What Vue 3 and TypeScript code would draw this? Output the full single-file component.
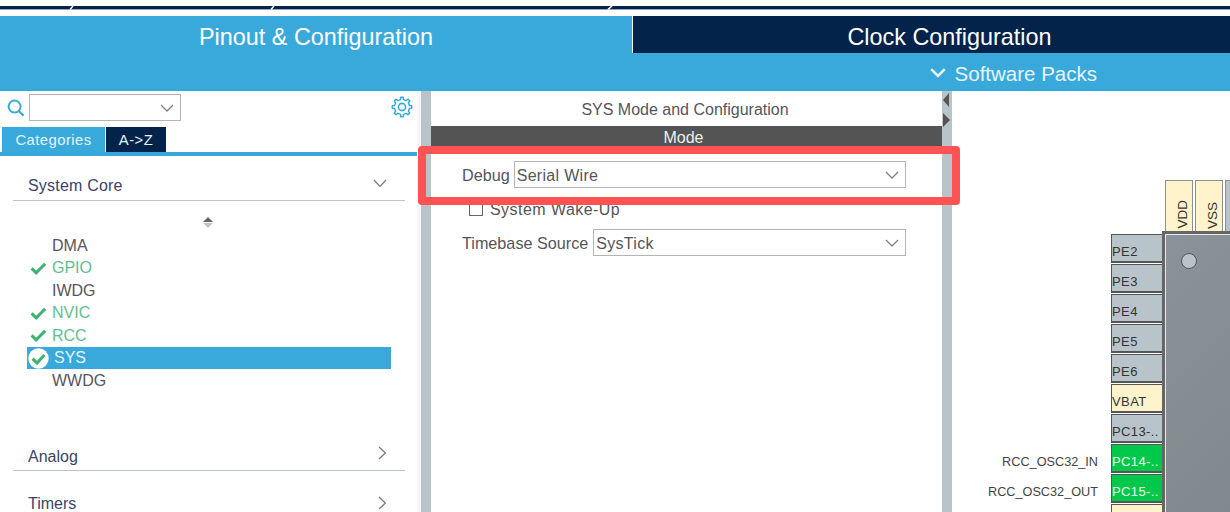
<script setup lang="ts">
interface Item { name: string; state: 'none' | 'ok' | 'active' }
const items: Item[] = [
  { name: 'DMA', state: 'none' },
  { name: 'GPIO', state: 'ok' },
  { name: 'IWDG', state: 'none' },
  { name: 'NVIC', state: 'ok' },
  { name: 'RCC', state: 'ok' },
  { name: 'SYS', state: 'active' },
  { name: 'WWDG', state: 'none' },
]
const leftPins = [
  { name: 'PE2', kind: 'gray', label: '' },
  { name: 'PE3', kind: 'gray', label: '' },
  { name: 'PE4', kind: 'gray', label: '' },
  { name: 'PE5', kind: 'gray', label: '' },
  { name: 'PE6', kind: 'gray', label: '' },
  { name: 'VBAT', kind: 'power', label: '' },
  { name: 'PC13-..', kind: 'gray', label: '' },
  { name: 'PC14-..', kind: 'green', label: 'RCC_OSC32_IN' },
  { name: 'PC15-..', kind: 'green', label: 'RCC_OSC32_OUT' },
  { name: '', kind: 'power', label: '' },
]
const topPins = [
  { name: 'VDD', kind: 'power' },
  { name: 'VSS', kind: 'power' },
  { name: '', kind: 'gray' },
]
function gearPath(): string {
  const teeth = 8
  const cx = 11
  const cy = 11
  const pts: string[] = []
  for (let i = 0; i < teeth; i++) {
    const a = (i / teeth) * Math.PI * 2
    const step = (Math.PI * 2) / teeth
    const seq: [number, number][] = [
      [7.4, a - step * 0.5],
      [7.6, a - step * 0.26],
      [9.8, a - step * 0.16],
      [9.8, a + step * 0.16],
      [7.6, a + step * 0.26],
    ]
    for (const [r, t] of seq) {
      pts.push(`${(cx + r * Math.cos(t)).toFixed(2)} ${(cy + r * Math.sin(t)).toFixed(2)}`)
    }
  }
  return 'M' + pts.join('L') + 'Z'
}
const gear = gearPath()
</script>

<template>
  <div class="app">
    <svg class="strip" width="1230" height="4" viewBox="0 0 1230 4">
      <rect width="1230" height="3.4" fill="#03234b" />
      <path d="M70 3.4 L73 0M271 3.4 L274 0M608 3.4 L612 0" stroke="#fff" stroke-width="1.5" fill="none" />
    </svg>

    <div class="tabs">
      <div class="tab tab-active">Pinout &amp; Configuration</div>
      <div class="tab tab-dark">Clock Configuration</div>
    </div>
    <div class="subbar">
      <svg class="sub-chevron" width="16" height="10" viewBox="0 0 16 10">
        <path d="M1.2 1.2 L8 8 L14.8 1.2" fill="none" stroke="#e6f5fc" stroke-width="2.6" />
      </svg>
      <span>Software Packs</span>
    </div>

    <div class="main">
      <aside class="left">
        <div class="search-row">
          <svg class="search" width="18" height="20" viewBox="0 0 18 20">
            <circle cx="7.6" cy="8.6" r="6" fill="none" stroke="#39a9dc" stroke-width="2" />
            <path d="M11.8 13 L16.6 17.8" stroke="#39a9dc" stroke-width="2.2" />
          </svg>
          <div class="select search-select">
            <span class="select-value"></span>
            <svg class="chev" width="14" height="8" viewBox="0 0 14 8"><path d="M1 1 L7 7 L13 1" /></svg>
          </div>
          <svg class="gear" width="22" height="22" viewBox="0 0 22 22">
            <path :d="gear" fill="none" stroke="#39a9dc" stroke-width="1.5" stroke-linejoin="round" />
            <circle cx="11" cy="11" r="3.6" fill="none" stroke="#39a9dc" stroke-width="1.6" />
          </svg>
        </div>
        <div class="cat-tabs">
          <div class="cat cat-on">Categories</div>
          <div class="cat cat-off">A-&gt;Z</div>
        </div>

        <div class="accordion">
          <div class="acc-head acc-open">
            <span>System Core</span>
            <svg width="14" height="9" viewBox="0 0 14 9"><path d="M1 1 L7 7.4 L13 1" fill="none" stroke="#7c7c7c" stroke-width="1.3" /></svg>
          </div>
          <div class="sorter">
            <i class="up"></i>
            <i class="down"></i>
          </div>
          <ul class="list">
            <li v-for="it in items" :key="it.name" :class="['row', it.state]">
              <span class="mark">
                <svg v-if="it.state === 'ok'" width="17" height="13" viewBox="0 0 17 13">
                  <path d="M1.6 6.4 L6.2 10.8 L15.2 1.8" fill="none" stroke="#3cb371" stroke-width="3" />
                </svg>
                <svg v-else-if="it.state === 'active'" width="21" height="21" viewBox="0 0 21 21">
                  <circle cx="10.5" cy="10.5" r="10.2" fill="#fff" />
                  <path d="M4.6 10.6 L9 15 L16.4 7" fill="none" stroke="#3cb371" stroke-width="3" />
                </svg>
              </span>
              <span class="row-name">{{ it.name }}</span>
            </li>
          </ul>
          <div class="acc-head analog">
            <span>Analog</span>
            <svg width="9" height="14" viewBox="0 0 9 14"><path d="M1 1 L7.4 7 L1 13" fill="none" stroke="#7c7c7c" stroke-width="1.3" /></svg>
          </div>
          <div class="acc-head timers">
            <span>Timers</span>
            <svg width="9" height="14" viewBox="0 0 9 14"><path d="M1 1 L7.4 7 L1 13" fill="none" stroke="#7c7c7c" stroke-width="1.3" /></svg>
          </div>
        </div>
      </aside>

      <div class="split"></div>

      <section class="center">
        <h2 class="center-title">SYS Mode and Configuration</h2>
        <div class="mode-bar">Mode</div>
        <div class="form">
          <div class="form-row debug">
            <label>Debug</label>
            <div class="select">
              <span class="select-value">Serial Wire</span>
              <svg class="chev" width="14" height="8" viewBox="0 0 14 8"><path d="M1 1 L7 7 L13 1" /></svg>
            </div>
          </div>
          <div class="check-row">
            <span class="box"></span>
            <span class="check-text">System Wake-Up</span>
          </div>
          <div class="form-row timebase">
            <label>Timebase Source</label>
            <div class="select">
              <span class="select-value">SysTick</span>
              <svg class="chev" width="14" height="8" viewBox="0 0 14 8"><path d="M1 1 L7 7 L13 1" /></svg>
            </div>
          </div>
        </div>
      </section>

      <div class="split split-right">
        <i class="arrow-left"></i>
        <i class="arrow-right"></i>
      </div>

      <section class="canvas">
        <div class="package">
          <div class="top-pins">
            <div v-for="(p, i) in topPins" :key="i" :class="['tpin', p.kind]"><span>{{ p.name }}</span></div>
          </div>
          <div class="pkg-body">
            <div class="left-pins">
              <div v-for="(p, i) in leftPins" :key="i" class="pin-row">
                <span class="pin-label">{{ p.label }}</span>
                <div :class="['lpin', p.kind]">{{ p.name }}</div>
              </div>
            </div>
            <div class="chip">
              <div class="chip-inner"><i class="dot"></i></div>
            </div>
          </div>
        </div>
      </section>
    </div>

    <div class="callout"></div>
  </div>
</template>

<style>
html, body { margin: 0; background: #fff; }
</style>

<style scoped>
.app {
  position: relative;
  width: 1230px;
  height: 512px;
  overflow: hidden;
  background: #fff;
  display: flex;
  flex-direction: column;
  font-family: "Liberation Sans", Arial, sans-serif;
  color: #4a4a50;
}
.strip { display: block; height: 16px; flex: none; }
.tabs { display: flex; height: 37px; flex: none; }
.tab {
  display: flex;
  align-items: center;
  justify-content: center;
  font-size: 23.4px;
  color: #fff;
  padding-top: 6px;
  box-sizing: border-box;
}
.tab-active { width: 632px; background: #39a9dc; }
.tab-dark { flex: 1; background: #03234b; border-left: 1px solid #fff; padding-left: 36px; }
.subbar {
  height: 38px;
  flex: none;
  background: #39a9dc;
  color: #e6f5fc;
  display: flex;
  align-items: center;
  justify-content: flex-end;
  padding: 4px 133px 0 0;
  box-sizing: border-box;
  font-size: 20.5px;
  gap: 9px;
}
.sub-chevron { margin-top: -3px; }
.main { flex: 1; display: flex; min-height: 0; }

.left {
  width: 421px;
  flex: none;
  box-sizing: border-box;
  border-right: 4px solid #f5f6f7;
  display: flex;
  flex-direction: column;
}
.search-row {
  height: 36px;
  flex: none;
  display: flex;
  align-items: flex-start;
  padding: 3px 0 0 7px;
  box-sizing: border-box;
}
.search { margin-top: 4px; margin-right: 4px; flex: none; }
.gear { margin-left: auto; margin-right: 4px; margin-top: 2px; }
.select {
  flex: 1;
  height: 27px;
  box-sizing: border-box;
  border: 1.5px solid #b4b4b4;
  display: flex;
  align-items: center;
  padding: 0 5px 0 2px;
  background: #fff;
  font-size: 16px;
  color: #55555c;
}
.select-value { flex: 1; margin-top: 2px; letter-spacing: 0.3px; }
.search-select { flex: none; width: 152px; }
.chev { flex: none; margin-right: 1px; }
.chev path { fill: none; stroke: #808080; stroke-width: 1.3; }

.cat-tabs {
  display: flex;
  height: 29px;
  flex: none;
  padding-left: 2px;
  border-bottom: 4px solid #39a9dc;
  box-sizing: border-box;
  gap: 1px;
}
.cat {
  display: flex;
  align-items: center;
  justify-content: center;
  color: #e6f5fc;
  font-size: 14.8px;
  letter-spacing: 0.45px;
}
.cat-on { width: 103px; background: #39a9dc; }
.cat-off { width: 60px; background: #03234b; }

.accordion { padding: 0 12px 0 13px; flex: 1; }
.acc-head {
  display: flex;
  align-items: center;
  justify-content: space-between;
  box-sizing: border-box;
  height: 45px;
  padding: 15px 18px 0 15px;
  border-bottom: 1px solid #bcc4cc;
  color: #3b4466;
  font-size: 16px;
}
.acc-open span { letter-spacing: 0.2px; }
.acc-head svg { margin-top: -4px; }
.sorter {
  display: flex;
  flex-direction: column;
  align-items: center;
  gap: 1px;
  height: 27px;
  justify-content: flex-end;
  padding-right: 3px;
}
.up, .down {
  width: 0;
  height: 0;
  border-left: 5px solid transparent;
  border-right: 5px solid transparent;
}
.up { border-bottom: 5px solid #666; }
.down { border-top: 5px solid #c4c4c4; }
.list { list-style: none; margin: 6.4px 0 0; padding: 0 0 0 14px; width: 364px; box-sizing: content-box; }
.row {
  height: 22.5px;
  display: flex;
  align-items: center;
  font-size: 16px;
  color: #55555c;
  width: 364px;
  box-sizing: border-box;
}
.mark { width: 25px; flex: none; display: flex; align-items: center; padding-left: 3px; box-sizing: border-box; }
.row.ok { color: #62c08c; }
.row.active { background: #39a9dc; color: #e6f5fc; }
.row.active .mark { width: 27px; padding-left: 1px; }
.analog { margin-top: 35.6px; padding-top: 16px; height: 44px; }
.analog svg { margin-top: -7px; }
.timers { border-bottom: none; margin-top: -4px; padding-top: 26px; height: 48px; line-height: 14px; }
.timers svg { margin-top: -3px; }

.split { width: 10px; flex: none; background: #b9c3ca; position: relative; }
.split-right { width: 10px; }
.arrow-left, .arrow-right {
  position: absolute;
  width: 0;
  height: 0;
  border-top: 7px solid transparent;
  border-bottom: 7px solid transparent;
}
.arrow-left { left: 1px; top: 2px; border-right: 6px solid #555; }
.arrow-right { left: 1px; top: 22px; border-left: 7px solid #555; }

.center { width: 511px; flex: none; display: flex; flex-direction: column; }
.center-title {
  margin: 0;
  height: 35px;
  display: flex;
  align-items: center;
  justify-content: center;
  font-weight: 400;
  font-size: 16px;
  color: #55555c;
  box-sizing: border-box;
  padding: 3px 3px 0 0;
}
.mode-bar {
  height: 24px;
  flex: none;
  background: #545454;
  color: #eee;
  display: flex;
  align-items: flex-start;
  justify-content: center;
  font-size: 16px;
  padding: 3px 6px 0 0;
  box-sizing: border-box;
}
.form { padding: 11px 36px 0 31px; display: flex; flex-direction: column; }
.form-row { display: flex; align-items: center; gap: 5px; font-size: 16.2px; color: #55555c; height: 27px; }
.form-row label { margin-top: 2px; }
.form-row.debug { gap: 4px; }
.check-row {
  display: flex;
  align-items: center;
  gap: 7px;
  height: 41px;
  padding: 1px 0 0 7px;
  box-sizing: border-box;
  font-size: 16px;
  color: #55555c;
  align-self: flex-start;
}
.check-text { letter-spacing: 0.45px; margin-top: 1px; }
.box {
  width: 14px;
  height: 14px;
  box-sizing: border-box;
  border: 1.5px solid #666;
  background: #fff;
}

.canvas { flex: 1; position: relative; overflow: hidden; background: #fff; }
.package { position: absolute; left: 20px; top: 89px; width: 300px; }
.top-pins { display: flex; gap: 2px; margin-left: 193px; height: 51px; }
.tpin {
  width: 28px;
  box-sizing: border-box;
  border: 1px solid #8b8f92;
  border-bottom: none;
  display: flex;
  align-items: flex-end;
  justify-content: center;
  font-size: 13.5px;
  color: #333;
  padding: 0 0 2px 6px;
}
.tpin span { writing-mode: vertical-rl; transform: rotate(180deg); }
.power { background: #fff3cc; }
.gray { background: #b9c4ca; }
.pkg-body { display: flex; }
.left-pins { width: 190px; flex: none; padding-top: 3px; display: flex; flex-direction: column; gap: 1px; }
.pin-row { display: flex; align-items: center; height: 29px; }
.pin-label {
  width: 126px;
  flex: none;
  text-align: right;
  font-size: 12.7px;
  color: #444;
  padding-top: 7px;
}
.lpin {
  margin-left: 13px;
  width: 51px;
  height: 29px;
  box-sizing: border-box;
  border: 1px solid #555;
  border-bottom-width: 2px;
  border-right: none;
  display: flex;
  align-items: center;
  padding: 7px 0 0 0;
  font-size: 13px;
  letter-spacing: 0.4px;
  color: #333;
}
.lpin.green { background: #00c84a; color: #e8fff0; }
.chip {
  flex: 1;
  height: 300px;
  box-sizing: border-box;
  background: #666;
  padding: 3px 0 0 3px;
}
.chip-inner {
  height: 100%;
  box-sizing: border-box;
  border: solid #e6e9eb;
  border-width: 1px 0 0 1px;
  background: linear-gradient(135deg, #8b9398, #7f878c);
  position: relative;
}
.dot {
  position: absolute;
  left: 15px;
  top: 18px;
  width: 16px;
  height: 16px;
  box-sizing: border-box;
  border-radius: 50%;
  background: #b9c4ca;
  border: 1.5px solid #555;
}

.callout {
  position: absolute;
  left: 418px;
  top: 146px;
  width: 542px;
  height: 59px;
  box-sizing: border-box;
  border: 8px solid #ff5252;
  border-radius: 4px;
  pointer-events: none;
}
</style>
